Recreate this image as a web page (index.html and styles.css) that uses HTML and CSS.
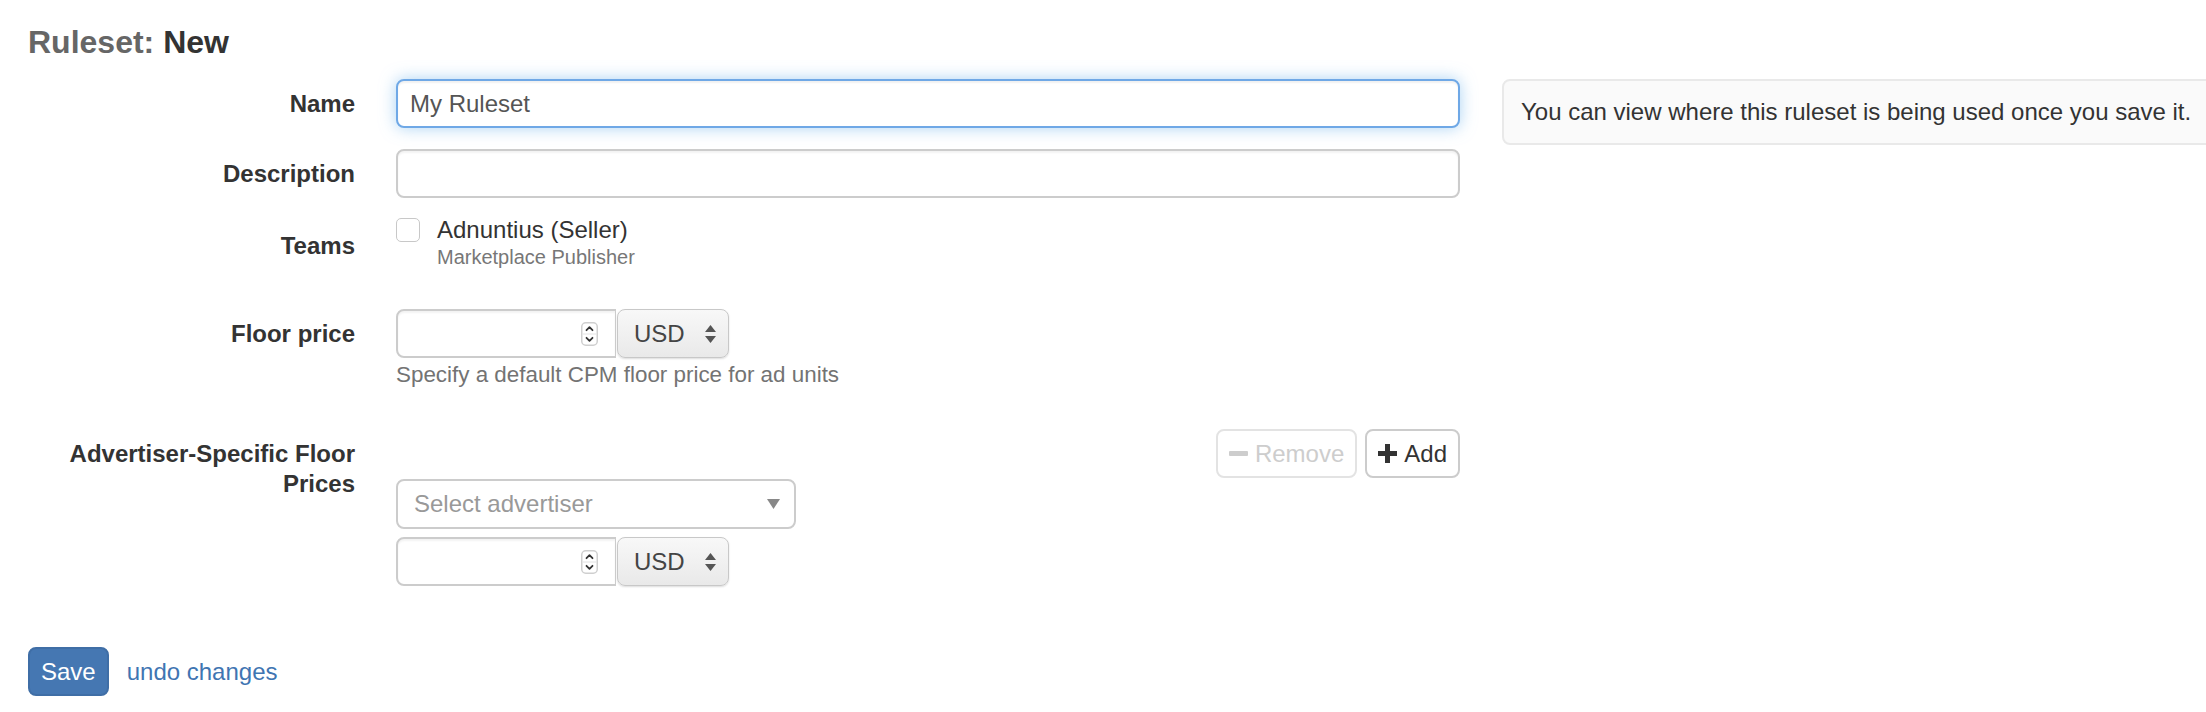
FILE: index.html
```html
<!DOCTYPE html>
<html lang="en">
<head>
<meta charset="utf-8">
<title>Ruleset: New</title>
<link rel="stylesheet" href="styles.css">
</head>
<body>
<div class="page">
  <h1 class="title"><span class="title-muted">Ruleset:</span> New</h1>
  <div class="layout">
    <form class="form">
      <div class="row row-name">
        <label class="label">Name</label>
        <div class="control">
          <div class="input input-focus">My Ruleset</div>
        </div>
      </div>
      <div class="row row-desc">
        <label class="label">Description</label>
        <div class="control">
          <div class="input"></div>
        </div>
      </div>
      <div class="row row-teams">
        <label class="label label-teams">Teams</label>
        <div class="control check">
          <span class="checkbox"></span>
          <div class="check-text">
            <div class="check-title">Adnuntius (Seller)</div>
            <div class="check-sub">Marketplace Publisher</div>
          </div>
        </div>
      </div>
      <div class="row row-floor">
        <label class="label">Floor price</label>
        <div class="control">
          <div class="price-group">
            <div class="number-field">
              <svg class="spinner" width="17" height="24" viewBox="0 0 17 24"><rect x="0.75" y="0.75" width="15.5" height="22.5" rx="4" fill="#fff" stroke="#cfcfcf" stroke-width="1.5"/><line x1="1.5" y1="12" x2="15.5" y2="12" stroke="#e2e2e2" stroke-width="1"/><path d="M5.5 8.2 L8.5 5.2 L11.5 8.2" fill="none" stroke="#333" stroke-width="1.8" stroke-linecap="round" stroke-linejoin="round"/><path d="M5.5 15.8 L8.5 18.8 L11.5 15.8" fill="none" stroke="#333" stroke-width="1.8" stroke-linecap="round" stroke-linejoin="round"/></svg>
            </div>
            <div class="currency">
              <span>USD</span>
              <svg width="11" height="18" viewBox="0 0 11 18"><polygon points="0,7 5.5,0 11,7" fill="#555"/><polygon points="0,11 5.5,18 11,11" fill="#555"/></svg>
            </div>
          </div>
          <div class="help">Specify a default CPM floor price for ad units</div>
        </div>
      </div>
      <div class="row row-adv">
        <label class="label">Advertiser-Specific Floor Prices</label>
        <div class="control">
          <div class="btn-bar">
            <button type="button" class="btn btn-disabled"><svg width="19" height="5" viewBox="0 0 19 5"><rect width="19" height="5" rx="1" fill="#cdcdcd"/></svg>Remove</button>
            <button type="button" class="btn"><svg width="19" height="19" viewBox="0 0 19 19"><path d="M7 0h5v7h7v5h-7v7h-5v-7h-7v-5h7z" fill="#333"/></svg>Add</button>
          </div>
          <div class="adv-select">
            <span>Select advertiser</span>
            <svg width="13" height="10" viewBox="0 0 13 10"><polygon points="0,0 13,0 6.5,10" fill="#888"/></svg>
          </div>
          <div class="price-group price-group-adv">
            <div class="number-field">
              <svg class="spinner" width="17" height="24" viewBox="0 0 17 24"><rect x="0.75" y="0.75" width="15.5" height="22.5" rx="4" fill="#fff" stroke="#cfcfcf" stroke-width="1.5"/><line x1="1.5" y1="12" x2="15.5" y2="12" stroke="#e2e2e2" stroke-width="1"/><path d="M5.5 8.2 L8.5 5.2 L11.5 8.2" fill="none" stroke="#333" stroke-width="1.8" stroke-linecap="round" stroke-linejoin="round"/><path d="M5.5 15.8 L8.5 18.8 L11.5 15.8" fill="none" stroke="#333" stroke-width="1.8" stroke-linecap="round" stroke-linejoin="round"/></svg>
            </div>
            <div class="currency">
              <span>USD</span>
              <svg width="11" height="18" viewBox="0 0 11 18"><polygon points="0,7 5.5,0 11,7" fill="#555"/><polygon points="0,11 5.5,18 11,11" fill="#555"/></svg>
            </div>
          </div>
        </div>
      </div>
    </form>
    <aside class="info">You can view where this ruleset is being used once you save it.</aside>
  </div>
  <div class="actions">
    <button type="button" class="btn-primary">Save</button>
    <a class="link" href="#">undo changes</a>
  </div>
</div>
</body>
</html>
```

FILE: styles.css
```css
html, body {
  margin: 0;
  padding: 0;
  background: #fff;
  overflow: hidden;
}

body {
  font-family: "Liberation Sans", Arial, Helvetica, sans-serif;
  font-size: 24px;
  line-height: 30px;
  color: #333;
}

.page {
  padding: 24px 0 0 28px;
}

.title {
  margin: 0;
  font-size: 32px;
  line-height: 36px;
  font-weight: bold;
  color: #333;
}

.title-muted {
  color: #666;
}

.layout {
  display: flex;
  align-items: flex-start;
  margin-top: 19px;
}

.form {
  width: 1432px;
  flex-shrink: 0;
}

.row {
  display: grid;
  grid-template-columns: 327px 1064px;
  column-gap: 41px;
}

.row-desc { margin-top: 21px; }
.row-teams { margin-top: 17px; }
.row-floor { margin-top: 40px; }
.row-adv { margin-top: 39px; }

.label {
  padding-top: 10px;
  font-weight: bold;
  text-align: right;
  color: #333;
}

.label-teams {
  padding-top: 16px;
}

.control {
  min-width: 0;
}

.input {
  box-sizing: border-box;
  height: 49px;
  padding: 0 12px;
  border: 2px solid #ccc;
  border-radius: 8px;
  background: #fff;
  color: #555;
  line-height: 45px;
  box-shadow: inset 0 2px 2px rgba(0, 0, 0, 0.05);
}

.input-focus {
  border-color: #6fa8e6;
  box-shadow: inset 0 2px 2px rgba(0, 0, 0, 0.06), 0 0 16px rgba(102, 175, 233, 0.55);
}

.check {
  display: flex;
  align-items: flex-start;
  gap: 17px;
}

.checkbox {
  box-sizing: border-box;
  width: 24px;
  height: 24px;
  margin-top: 3px;
  border: 1.5px solid #c8c8c8;
  border-radius: 5px;
  background: #fff;
  flex-shrink: 0;
}

.check-title {
  line-height: 30px;
  color: #333;
}

.check-sub {
  font-size: 20px;
  line-height: 24px;
  color: #777;
}

.price-group {
  display: flex;
  gap: 1px;
}

.number-field {
  box-sizing: border-box;
  width: 220px;
  height: 49px;
  border: 2px solid #ccc;
  border-right-width: 1px;
  border-radius: 8px 0 0 8px;
  background: #fff;
  display: flex;
  align-items: center;
  justify-content: flex-end;
  padding-right: 17px;
  box-shadow: inset 0 2px 2px rgba(0, 0, 0, 0.05);
}

.currency {
  box-sizing: border-box;
  width: 112px;
  height: 49px;
  border: 1.5px solid #c8c8c8;
  border-radius: 8px;
  background: linear-gradient(#f8f8f8, #e9e9e9);
  box-shadow: 0 1px 2px rgba(0, 0, 0, 0.14);
  display: flex;
  align-items: center;
  justify-content: space-between;
  padding: 0 12px 0 16px;
  color: #444;
}

.help {
  margin-top: 2px;
  font-size: 22.4px;
  line-height: 30px;
  color: #737373;
}

.btn-bar {
  display: flex;
  justify-content: flex-end;
  gap: 8px;
}

.btn {
  box-sizing: border-box;
  height: 49px;
  display: flex;
  align-items: center;
  gap: 7px;
  padding: 0 11px;
  border: 2px solid #ccc;
  border-radius: 8px;
  background: #fff;
  font-family: inherit;
  font-size: 24px;
  color: #333;
}

.btn-disabled {
  border-color: #e3e3e3;
  color: #cdcdcd;
}

.adv-select {
  box-sizing: border-box;
  width: 400px;
  height: 50px;
  margin-top: 1px;
  border: 2px solid #ccc;
  border-radius: 8px;
  background: #fff;
  display: flex;
  align-items: center;
  justify-content: space-between;
  padding: 0 14px 0 16px;
  color: #999;
}

.price-group-adv {
  margin-top: 8px;
}

.info {
  box-sizing: border-box;
  flex-shrink: 0;
  width: 740px;
  margin-left: 42px;
  padding: 16px 17px;
  min-height: 65px;
  border: 2px solid #e9e9e9;
  border-radius: 8px;
  background: #fafafa;
  color: #333;
  line-height: 30px;
}

.actions {
  display: flex;
  align-items: center;
  gap: 18px;
  margin-top: 61px;
}

.btn-primary {
  box-sizing: border-box;
  height: 49px;
  padding: 0 11px;
  border: 2px solid #3f6ea6;
  border-radius: 8px;
  background: #4577b2;
  color: #fff;
  font-family: inherit;
  font-size: 24px;
}

.link {
  color: #3f75b2;
  text-decoration: none;
}
```
